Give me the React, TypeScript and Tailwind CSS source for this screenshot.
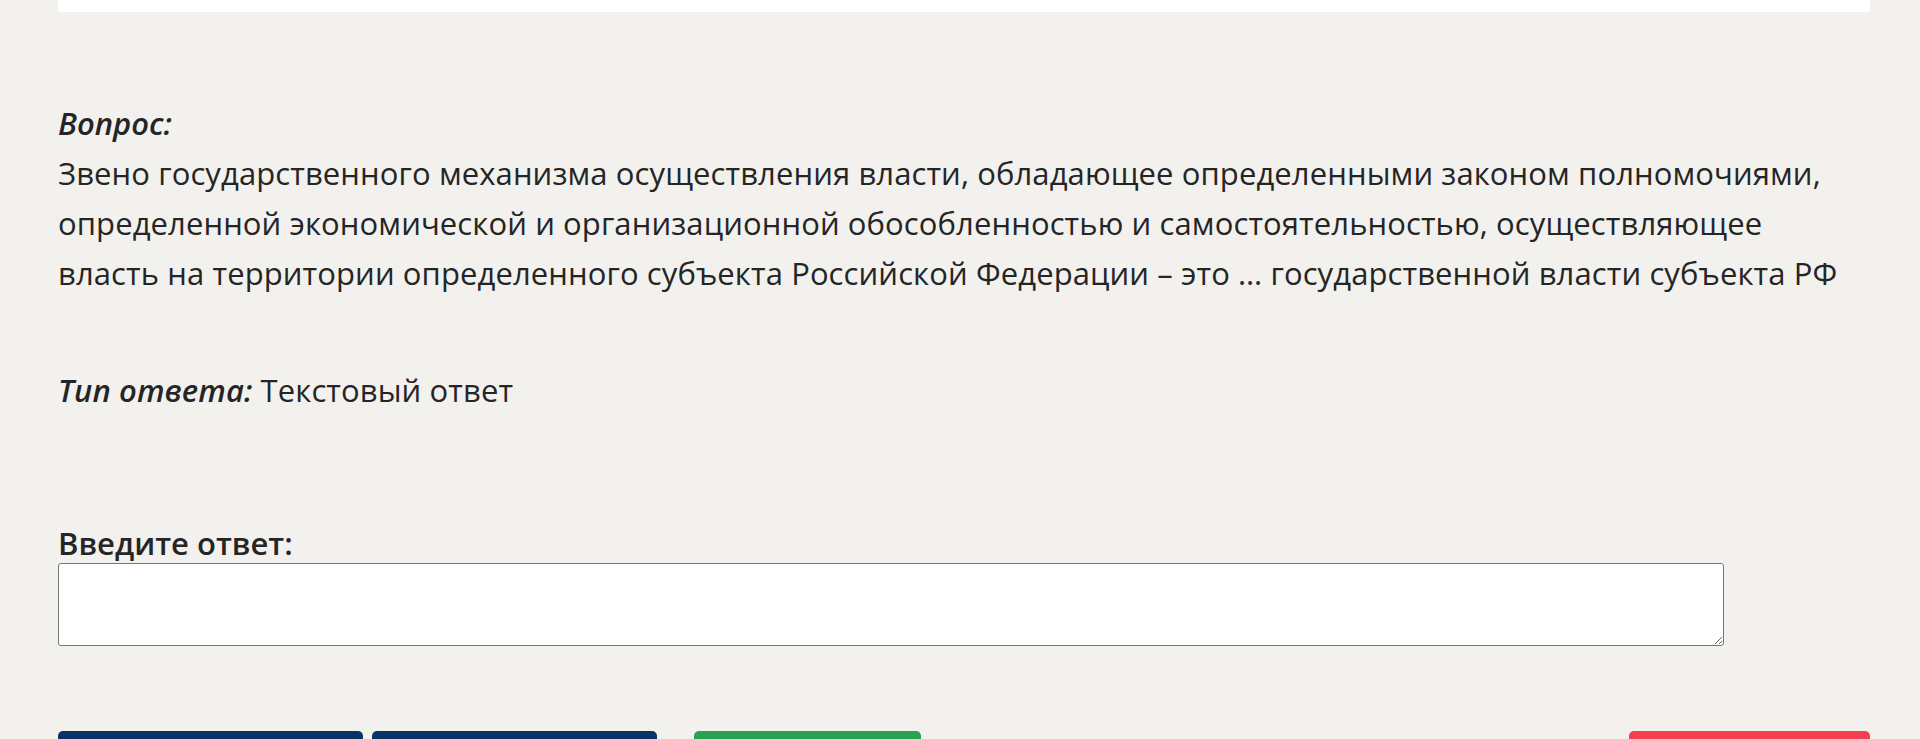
import React from "react";

const App = () => {
  return (
    <div className="min-h-[739px] bg-[#f2f1ee] pl-[58px] pr-[50px] font-['Open_Sans',sans-serif] text-[31px] text-[#252525]">
      <div className="h-[12px] bg-white" />

      <div className="pt-[86px] leading-[50px]">
        <div className="font-semibold italic">Вопрос:</div>
        <div className="w-[1790px] tracking-[0.1px]">
          Звено государственного механизма осуществления власти, обладающее
          определенными законом полномочиями, определенной экономической и
          организационной обособленностью и самостоятельностью, осуществляющее
          власть на территории определенного субъекта Российской Федерации – это
          … государственной власти субъекта РФ
        </div>
      </div>

      <div className="mt-[67px] leading-[50px] tracking-[0.1px]">
        <span className="font-semibold italic">Тип ответа:</span> Текстовый
        ответ
      </div>

      <div className="mt-[108px] flex flex-col">
        <label className="font-semibold leading-[40px]">Введите ответ:</label>
        <textarea className="h-[83px] w-[1666px] rounded-[3px] border border-[#767676] bg-white" />
      </div>

      <div className="mt-[85px] flex items-start">
        <button className="h-[50px] w-[305px] rounded-[5px] bg-[#0a3366]" />
        <button className="ml-[9px] h-[50px] w-[285px] rounded-[5px] bg-[#0a3366]" />
        <button className="ml-[37px] h-[50px] w-[227px] rounded-[5px] bg-[#28a150]" />
        <button className="ml-auto h-[50px] w-[241px] rounded-[5px] bg-[#f43f51]" />
      </div>
    </div>
  );
};

export default App;
